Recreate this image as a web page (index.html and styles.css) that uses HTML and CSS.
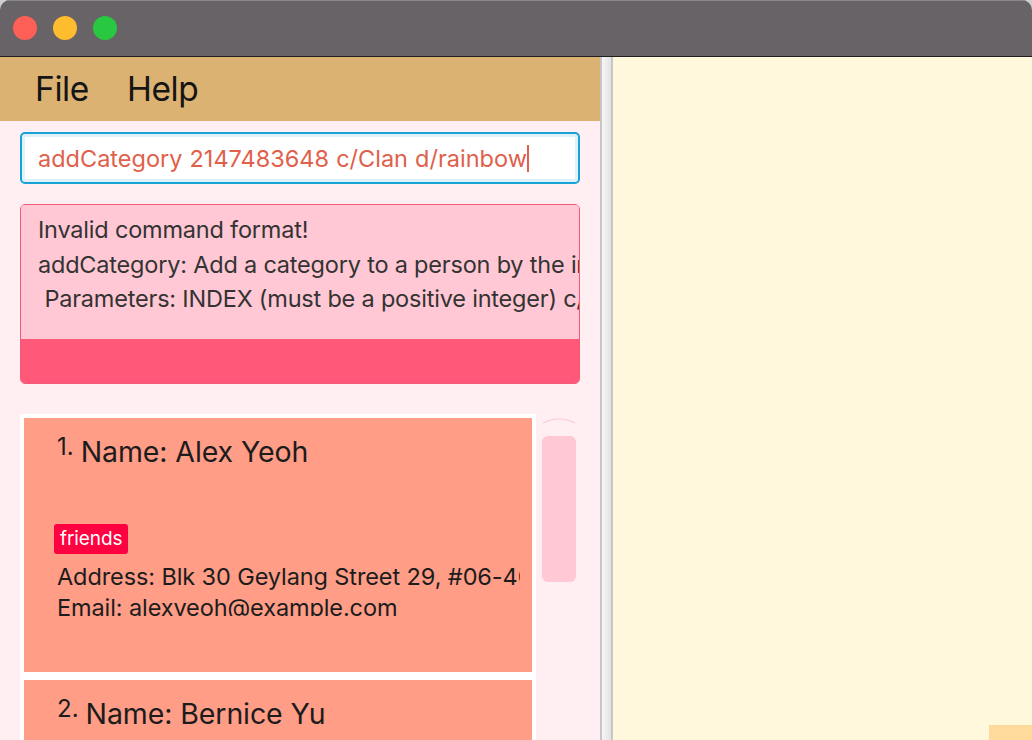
FILE: index.html
```html
<!DOCTYPE html>
<html>
<head>
<meta charset="utf-8">
<link rel="stylesheet" href="styles.css">
</head>
<body>
<div class="window">
  <div class="titlebar">
    <span class="light red"></span>
    <span class="light yellow"></span>
    <span class="light green"></span>
  </div>
  <div class="main">
    <div class="left">
      <div class="menubar">
        <span class="menu">File</span>
        <span class="menu">Help</span>
      </div>
      <div class="cmd">
        <span class="cmd-text">addCategory 2147483648 c/Clan d/rainbow</span><span class="caret"></span>
      </div>
      <div class="result">
        <div class="result-text">
          <div class="line">Invalid command format!</div>
          <div class="line">addCategory: Add a category to a person by the index number used in the displayed person list.</div>
          <div class="line">&nbsp;Parameters: INDEX (must be a positive integer) c/CATEGORY d/DESCRIPTION</div>
        </div>
        <div class="result-foot"></div>
      </div>
      <div class="listarea">
        <div class="cards">
          <div class="card">
            <div class="card-inner">
              <div class="name-row"><span class="idx">1.</span><span class="name">Name: Alex Yeoh</span></div>
              <div class="tags"><span class="tag">friends</span></div>
              <div class="fields">
                <div class="field">Address: Blk 30 Geylang Street 29, #06-40</div>
                <div class="field clip">Email: alexyeoh@example.com</div>
              </div>
            </div>
          </div>
          <div class="card">
            <div class="card-inner">
              <div class="name-row"><span class="idx">2.</span><span class="name name2">Name: Bernice Yu</span></div>
            </div>
          </div>
        </div>
        <div class="scrollbar">
          <svg class="arrow" width="34" height="8" viewBox="0 0 34 8"><path d="M1 6 Q17 -2 33 6" fill="none" stroke="#ffc8d4" stroke-width="1.2"/></svg>
          <div class="thumb"></div>
        </div>
      </div>
    </div>
    <div class="divider"></div>
    <div class="right">
      <div class="corner"></div>
    </div>
  </div>
</div>
</body>
</html>
```
FILE: styles.css
```css
html, body {
  margin: 0;
  padding: 0;
  background: #cfcfcf;
  overflow: hidden;
}
body {
  width: 1032px;
  height: 740px;
  font-family: "Inter", "Liberation Sans", sans-serif;
}
.window {
  width: 1032px;
  height: 740px;
  display: flex;
  flex-direction: column;
  border-radius: 10px 10px 0 0;
  overflow: hidden;
}
.titlebar {
  height: 56px;
  background: #676366;
  border-bottom: 1px solid #1f1d1e;
  display: flex;
  align-items: center;
  gap: 16px;
  padding-left: 13px;
  box-shadow: inset 0 1px 0 #8a8789;
}
.light {
  width: 24px;
  height: 24px;
  border-radius: 50%;
  display: block;
}
.red { background: #fe5f57; }
.yellow { background: #febc2e; }
.green { background: #28c840; }
.main {
  flex: 1;
  display: flex;
  min-height: 0;
}
.left {
  width: 600px;
  background: #ffeff2;
  display: flex;
  flex-direction: column;
  overflow: hidden;
}
.menubar {
  height: 64px;
  background: #dcb272;
  display: flex;
  align-items: center;
  padding-left: 35px;
  gap: 38px;
}
.menu {
  font-size: 33.5px;
  color: #151515;
  letter-spacing: -0.4px;
}
.cmd {
  margin: 11px 20px 0 20px;
  height: 48px;
  border: 2px solid #18a2d8;
  border-radius: 5px;
  background: #fff;
  box-shadow: inset 0 0 0 3px #dff2fa;
  display: flex;
  align-items: center;
  padding-left: 16px;
}
.cmd-text {
  font-size: 23.5px;
  color: #e0604b;
  letter-spacing: 0px;
  word-spacing: 0.5px;
  white-space: nowrap;
}
.caret {
  width: 2px;
  height: 27px;
  background: #e0604b;
  margin-left: 0px;
}
.result {
  margin: 20px 20px 0 20px;
  height: 178px;
  border: 1px solid #f5597a;
  border-radius: 5px;
  overflow: hidden;
  display: flex;
  flex-direction: column;
}
.result-text {
  height: 134px;
  background: #ffc8d4;
  padding: 8px 0 0 17px;
  box-sizing: border-box;
  overflow: hidden;
}
.line {
  font-size: 23.5px;
  line-height: 34.5px;
  color: #333333;
  white-space: nowrap;
  letter-spacing: -0.2px;
}
.result-foot {
  flex: 1;
  background: #ff5878;
}
.listarea {
  margin-top: 30px;
  display: flex;
  padding-left: 20px;
  flex: 1;
  min-height: 0;
}
.cards {
  width: 516px;
  display: flex;
  flex-direction: column;
}
.card {
  background: #ffffff;
  padding: 4px;
  width: 516px;
  box-sizing: border-box;
}
.card-inner {
  background: #ff9d87;
  height: 254px;
  padding: 14px 0 0 33px;
  box-sizing: border-box;
  overflow: hidden;
}
.name-row {
  display: flex;
  align-items: flex-start;
  gap: 7px;
  height: 45px;
}
.idx {
  font-size: 24px;
  color: #1c1c1c;
}
.name {
  font-size: 28.5px;
  color: #1c1c1c;
  margin-top: 2px;
  letter-spacing: -0.1px;
}
.name2 {
  margin-left: 0px;
}
.tags {
  margin-top: 47px;
  margin-left: -3px;
  height: 30px;
  display: flex;
}
.tag {
  background: #ff0040;
  color: #ffffff;
  font-size: 19px;
  padding: 0 6px;
  border-radius: 3px;
  line-height: 30px;
  letter-spacing: -0.1px;
}
.fields {
  width: 463px;
  overflow: hidden;
  margin-top: 7px;
}
.field {
  font-size: 23.5px;
  color: #1c1c1c;
  line-height: 31px;
  white-space: nowrap;
  letter-spacing: -0.1px;
}
.clip {
  height: 24px;
  overflow: hidden;
}
.scrollbar {
  width: 34px;
  margin-left: 6px;
  display: flex;
  flex-direction: column;
  align-items: center;
}
.arrow {
  display: block;
  margin-top: 3px;
}
.thumb {
  margin-top: 11px;
  width: 34px;
  height: 146px;
  background: #ffc8d4;
  border-radius: 6px;
}
.divider {
  width: 9px;
  border-left: 2px solid #c6c6c6;
  border-right: 2px solid #c6c6c6;
  background: linear-gradient(to right, #f6f6f6, #e2e2e2);
}
.right {
  flex: 1;
  background: #fff8dc;
  display: flex;
  justify-content: flex-end;
  align-items: flex-end;
}
.corner {
  width: 43px;
  height: 15px;
  background: #ffda9c;
}
```
